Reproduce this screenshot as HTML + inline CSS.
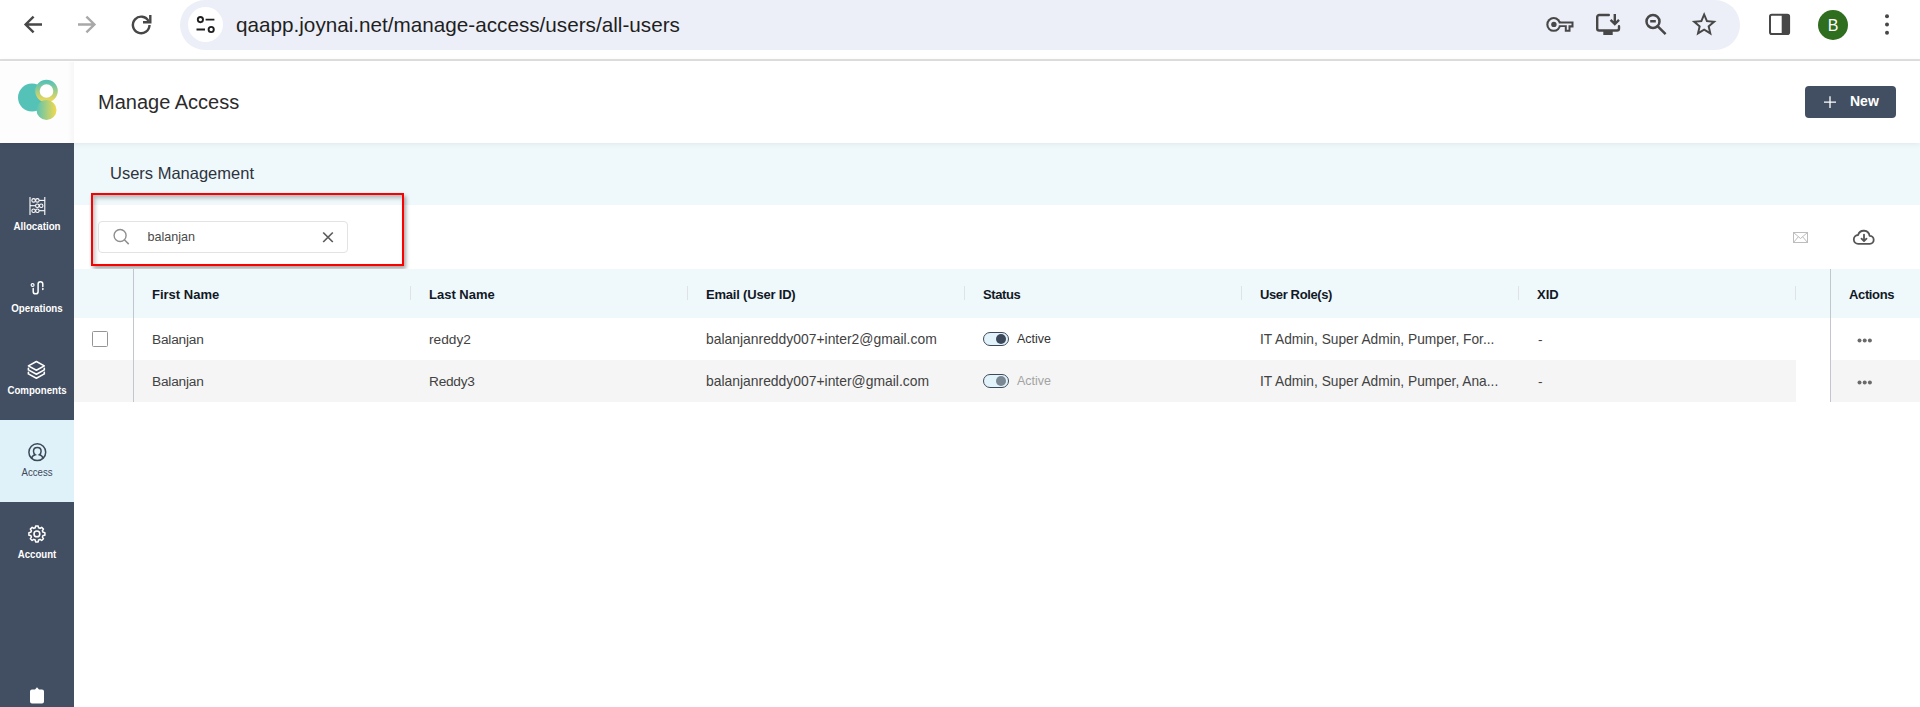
<!DOCTYPE html>
<html><head><meta charset="utf-8">
<style>
*{margin:0;padding:0;box-sizing:border-box}
html,body{width:1920px;height:707px;overflow:hidden;background:#fff;font-family:"Liberation Sans",sans-serif}
.a{position:absolute}
.t{position:absolute;white-space:nowrap;line-height:1}
svg{position:absolute;overflow:visible}
</style></head><body>

<!-- ===== Browser chrome ===== -->
<div class="a" style="left:0;top:0;width:1920px;height:59px;background:#fff"></div>
<div class="a" style="left:0;top:59px;width:1920px;height:2px;background:#dfe1de"></div>
<!-- back -->
<svg style="left:0;top:0" width="60" height="50"><path d="M42 24.5H27 M33.6 16.6L25.6 24.5L33.6 32.4" fill="none" stroke="#474747" stroke-width="2.4"/></svg>
<!-- forward -->
<svg style="left:0;top:0" width="120" height="50"><path d="M78 24.5H93 M86.4 16.6L94.4 24.5L86.4 32.4" fill="none" stroke="#a8a8a8" stroke-width="2.4"/></svg>
<!-- reload -->
<svg style="left:0;top:0" width="160" height="50"><path d="M148.6 21.2A8.3 8.3 0 1 0 149.5 25" fill="none" stroke="#474747" stroke-width="2.4"/><path d="M143 22.2H150.3V15" fill="none" stroke="#474747" stroke-width="2.4"/></svg>
<!-- omnibox -->
<div class="a" style="left:180px;top:0;width:1560px;height:50px;border-radius:25px;background:#eceff7"></div>
<div class="a" style="left:188px;top:7px;width:35px;height:35px;border-radius:50%;background:#fff"></div>
<svg style="left:0;top:0" width="240" height="50"><circle cx="200.4" cy="19.6" r="2.6" fill="none" stroke="#1f1f1f" stroke-width="1.9"/><path d="M205.6 19.6H214.4 M196.5 29.5H205" stroke="#1f1f1f" stroke-width="1.9"/><circle cx="211.2" cy="29.5" r="2.6" fill="none" stroke="#1f1f1f" stroke-width="1.9"/></svg>
<div class="t" style="left:236px;top:15px;font-size:20.7px;color:#1f1f1f">qaapp.joynai.net/manage-access/users/all-users</div>
<!-- key -->
<svg style="left:0;top:0" width="1920" height="50">
 <circle cx="1553.7" cy="24.4" r="7.4" fill="#474747"/>
 <path d="M1558 21.6H1573.5V27.4H1570.5V31.85H1564.8V26.9H1558Z" fill="#474747"/>
 <circle cx="1553.7" cy="24.4" r="5.3" fill="#eceff7"/>
 <path d="M1557 23.6H1571.5V25.3H1568.5V29.85H1566.8V25.3H1557Z" fill="#eceff7"/>
 <circle cx="1553.9" cy="24.4" r="2.7" fill="#474747"/>
</svg>
<!-- install -->
<svg style="left:0;top:0" width="1920" height="50"><path d="M1608.8 15H1599.3A2 2 0 0 0 1597.2 17V28.5A2 2 0 0 0 1599.2 30.5H1617A2 2 0 0 0 1619 28.5V26.2" fill="none" stroke="#474747" stroke-width="2.4" stroke-linecap="round"/><rect x="1603.3" y="31" width="9.4" height="4" fill="#474747"/><path d="M1614.8 14V24 M1610.6 19.8L1614.8 24.1L1619 19.8" fill="none" stroke="#474747" stroke-width="2.4"/></svg>
<!-- zoom out -->
<svg style="left:0;top:0" width="1920" height="50"><circle cx="1653" cy="21.4" r="6.5" fill="none" stroke="#474747" stroke-width="2.5"/><path d="M1650.2 21.3H1655.8 M1657.8 26.3L1665.6 34.2" stroke="#474747" stroke-width="2.5"/></svg>
<!-- star -->
<svg style="left:0;top:0" width="1920" height="50"><path transform="translate(1689.33 9.53) scale(1.235)" fill="#474747" d="M22 9.24l-7.19-.62L12 2 9.19 8.63 2 9.24l5.46 4.73L5.82 21 12 17.27 18.18 21l-1.63-7.03L22 9.24zM12 15.4l-3.76 2.27 1-4.28-3.32-2.88 4.380-.38L12 6.1l1.71 4.04 4.38.38-3.32 2.88 1 4.28L12 15.4z"/></svg>
<!-- side panel -->
<svg style="left:0;top:0" width="1920" height="50"><rect x="1770" y="14.7" width="19.1" height="19.3" rx="1.8" fill="none" stroke="#474747" stroke-width="2"/><rect x="1781.7" y="14.7" width="7.4" height="19.3" fill="#474747"/></svg>
<!-- avatar -->
<div class="a" style="left:1818px;top:10px;width:30px;height:30px;border-radius:50%;background:#2f6e1f"></div>
<div class="t" style="left:1827.8px;top:18px;font-size:16px;color:#fff">B</div>
<!-- kebab -->
<svg style="left:0;top:0" width="1920" height="50"><circle cx="1887" cy="16.2" r="2" fill="#474747"/><circle cx="1887" cy="24.5" r="2" fill="#474747"/><circle cx="1887" cy="32.8" r="2" fill="#474747"/></svg>

<!-- ===== App header ===== -->
<div class="a" style="left:0;top:61px;width:1920px;height:82px;background:#fff;box-shadow:0 1px 6px rgba(0,0,0,.07);z-index:2"></div>
<div class="a" style="left:0;top:62px;width:74px;height:81px;background:linear-gradient(to right,rgba(0,0,0,.006) 0,rgba(0,0,0,.006) 67px,rgba(0,0,0,.035) 74px);z-index:3"></div>
<svg style="left:0;top:0;z-index:4" width="80" height="140">
  <defs>
    <linearGradient id="g1" x1="0" y1="0" x2="0" y2="1"><stop offset="0" stop-color="#58c3b5"/><stop offset="1" stop-color="#e9d75a"/></linearGradient>
    <linearGradient id="g2" x1="0" y1="0" x2="1" y2="0"><stop offset="0" stop-color="#5ac4b4"/><stop offset="1" stop-color="#f3d94e"/></linearGradient>
  </defs>
  <circle cx="32" cy="97.6" r="14" fill="#55c2b7"/>
  <circle cx="46.5" cy="91" r="9.05" fill="#fff" stroke="url(#g1)" stroke-width="4.5"/>
  <circle cx="46.5" cy="110" r="10" fill="url(#g2)"/>
</svg>
<div class="t" style="left:98px;top:92.2px;font-size:20px;color:#2b2b2b;z-index:4">Manage Access</div>
<div class="a" style="left:1805px;top:86px;width:91px;height:32px;border-radius:4px;background:#424e61;z-index:4"></div>
<svg style="left:0;top:0;z-index:5" width="1920" height="140"><path d="M1830 96.3V108 M1824 102.2H1836" stroke="#fff" stroke-width="1.3"/></svg>
<div class="t" style="left:1850px;top:94.4px;font-size:14px;font-weight:bold;color:#fff;z-index:5">New</div>

<!-- ===== Sidebar ===== -->
<div class="a" style="left:0;top:143px;width:74px;height:564px;background:#424e61"></div>
<div class="a" style="left:0;top:420px;width:74px;height:82px;background:#dff2f9"></div>

<!-- ===== Content ===== -->
<div class="a" style="left:74px;top:143px;width:1846px;height:62px;background:#eff8fa"></div>
<div class="t" style="left:110px;top:165.2px;font-size:16.5px;color:#2d3340">Users Management</div>


<!-- sidebar items -->
<!-- abacus -->
<svg style="left:0;top:0" width="74" height="707">
 <g fill="none" stroke="#fff" stroke-width="1.1">
  <path d="M30 197V215 M44.8 197V215"/>
  <circle cx="33.6" cy="200.4" r="1.75"/><circle cx="37.4" cy="200.4" r="1.75"/><path d="M39.2 200.4H44.8"/>
  <path d="M30 205.7H35.5"/><circle cx="37.3" cy="205.7" r="1.75"/><circle cx="41.2" cy="205.7" r="1.75"/>
  <circle cx="33.6" cy="210.7" r="1.75"/><circle cx="37.4" cy="210.7" r="1.75"/><path d="M39.2 210.7H44.8"/>
 </g>
</svg>
<div class="t" style="left:0;width:74px;text-align:center;top:221.2px;font-size:11px;font-weight:bold;color:#fff;transform:scaleX(.885)">Allocation</div>
<!-- operations -->
<svg style="left:0;top:0" width="74" height="707">
 <g fill="none" stroke="#fff" stroke-width="1.5" stroke-linecap="round">
  <circle cx="32.6" cy="285" r="1.45" stroke-width="1.2"/>
  <path d="M33.2 288.4V291.4A2.45 2.45 0 0 0 38.1 291.4V284A2.35 2.35 0 0 1 42.8 284V286.4"/>
  <path d="M42.8 288.6V289.4"/>
 </g>
</svg>
<div class="t" style="left:0;width:74px;text-align:center;top:303.2px;font-size:11px;font-weight:bold;color:#fff;transform:scaleX(.885)">Operations</div>
<!-- components layers -->
<svg style="left:0;top:0" width="74" height="707">
 <g fill="none" stroke="#fff" stroke-width="1.6" stroke-linejoin="round" stroke-linecap="round">
  <path d="M36.4 361.5L44.3 365.9L36.4 370.2L28.4 365.9Z"/>
  <path d="M28.4 368.2V369.9L36.4 374.2L44.3 369.9V368.2"/>
  <path d="M28.4 372.2V373.9L36.4 378.2L44.3 373.9V372.2"/>
 </g>
</svg>
<div class="t" style="left:0;width:74px;text-align:center;top:385.2px;font-size:11px;font-weight:bold;color:#fff;transform:scaleX(.88)">Components</div>
<!-- access -->
<svg style="left:0;top:0" width="74" height="707">
 <g fill="none" stroke="#3d4859" stroke-width="1.5">
  <circle cx="37.3" cy="452.2" r="8.4"/>
  <path d="M31.6 458.3C32.2 455.9 33.8 455.2 35.3 454.8C33.9 453.8 33.5 452.6 33.5 451.2C33.5 448.9 35.2 447.5 37.3 447.5C39.4 447.5 41.1 448.9 41.1 451.2C41.1 452.6 40.7 453.8 39.3 454.8C40.8 455.2 42.4 455.9 43 458.3"/>
 </g>
</svg>
<div class="t" style="left:0;width:74px;text-align:center;top:467.2px;font-size:11px;color:#3d4859;transform:scaleX(.875)">Access</div>
<!-- account gear -->
<svg style="left:0;top:0" width="74" height="707">
 <g fill="none" stroke="#fff" stroke-width="1.5" stroke-linejoin="round">
  <path d="M35.27 527.81L35.63 525.90 L38.17 525.90 L38.53 527.81 A6.30 6.30 0 0 1 40.05 528.44L41.66 527.35 L43.45 529.14 L42.36 530.75 A6.30 6.30 0 0 1 42.99 532.27L44.90 532.63 L44.90 535.17 L42.99 535.53 A6.30 6.30 0 0 1 42.36 537.05L43.45 538.66 L41.66 540.45 L40.05 539.36 A6.30 6.30 0 0 1 38.53 539.99L38.17 541.90 L35.63 541.90 L35.27 539.99 A6.30 6.30 0 0 1 33.75 539.36L32.14 540.45 L30.35 538.66 L31.44 537.05 A6.30 6.30 0 0 1 30.81 535.53L28.90 535.17 L28.90 532.63 L30.81 532.27 A6.30 6.30 0 0 1 31.44 530.75L30.35 529.14 L32.14 527.35 L33.75 528.44 A6.30 6.30 0 0 1 35.27 527.81Z"/>
  <circle cx="36.9" cy="533.9" r="2.9" stroke-width="1.6"/>
 </g>
</svg>
<div class="t" style="left:0;width:74px;text-align:center;top:549.2px;font-size:11px;font-weight:bold;color:#fff;transform:scaleX(.875)">Account</div>
<!-- clipboard -->
<svg style="left:0;top:0" width="74" height="707">
 <path d="M32 689.5H35L37 687.2L39 689.5H42A2 2 0 0 1 44 691.5V701.5A2 2 0 0 1 42 703.5H32A2 2 0 0 1 30 701.5V691.5A2 2 0 0 1 32 689.5Z" fill="#fff"/>
</svg>

<!-- search area -->
<div class="a" style="left:98px;top:221px;width:249.5px;height:31.5px;border:1px solid #e3e3e3;border-radius:4px;background:#fff"></div>
<svg style="left:0;top:0" width="400" height="300"><circle cx="120.1" cy="235.5" r="6" fill="none" stroke="#8f8f8f" stroke-width="1.4"/><path d="M124.4 239.8L128.7 244.1" stroke="#8f8f8f" stroke-width="1.5"/></svg>
<div class="t" style="left:147.4px;top:230.6px;font-size:12.6px;color:#4a4a4a">balanjan</div>
<svg style="left:0;top:0" width="400" height="300"><path d="M323.2 232.5L332.8 242 M332.8 232.5L323.2 242" stroke="#5c5c5c" stroke-width="1.7"/></svg>
<!-- red highlight box -->
<div class="a" style="left:91px;top:193px;width:313px;height:73px;border:2.5px solid #fa0000;box-shadow:2px 3px 4px rgba(0,0,0,.35), inset 2px 3px 4px rgba(0,0,0,.25)"></div>

<!-- toolbar icons -->
<svg style="left:0;top:0" width="1920" height="300">
 <g fill="none" stroke="#bdbdbd" stroke-width="1">
  <rect x="1793.5" y="232.5" width="14" height="10"/>
  <path d="M1793.5 232.5L1800.5 238.5L1807.5 232.5 M1793.5 242.5L1798.3 236.8 M1807.5 242.5L1802.7 236.8"/>
 </g>
 <g fill="none" stroke="#555" stroke-width="1.8" stroke-linecap="round" stroke-linejoin="round">
  <path d="M1858.3 243.8H1869.8A4 4 0 0 0 1869.6 235.8A5.9 5.9 0 0 0 1858.1 235A4.4 4.4 0 0 0 1858.3 243.8Z"/>
  <path d="M1864 234.6V240.8 M1861.5 238.6L1864 241.1L1866.5 238.6"/>
 </g>
</svg>

<!-- table header -->
<div class="a" style="left:74px;top:269px;width:1846px;height:49px;background:#eff8fa"></div>
<div class="a" style="left:74px;top:360px;width:1722px;height:42px;background:#f5f5f5"></div>
<div class="a" style="left:1831px;top:360px;width:89px;height:42px;background:#f5f5f5"></div>
<div class="a" style="left:133px;top:269px;width:1px;height:132.5px;background:#c2c7cf"></div>
<div class="a" style="left:1830px;top:269px;width:1px;height:132.5px;background:#c2c7cf"></div>
<div class="a" style="left:410px;top:286px;width:1px;height:14px;background:#dfe3e6"></div>
<div class="a" style="left:687px;top:286px;width:1px;height:14px;background:#dfe3e6"></div>
<div class="a" style="left:964px;top:286px;width:1px;height:14px;background:#dfe3e6"></div>
<div class="a" style="left:1241px;top:286px;width:1px;height:14px;background:#dfe3e6"></div>
<div class="a" style="left:1518px;top:286px;width:1px;height:14px;background:#dfe3e6"></div>
<div class="a" style="left:1795px;top:286px;width:1px;height:14px;background:#dfe3e6"></div>

<div class="t" style="left:152px;top:288.2px;font-size:13px;font-weight:bold;color:#121826">First Name</div>
<div class="t" style="left:429px;top:288.2px;font-size:13px;font-weight:bold;color:#121826">Last Name</div>
<div class="t" style="left:706px;top:288.2px;font-size:13px;font-weight:bold;color:#121826;letter-spacing:-.2px">Email (User ID)</div>
<div class="t" style="left:983px;top:288.2px;font-size:13px;font-weight:bold;color:#121826;letter-spacing:-.42px">Status</div>
<div class="t" style="left:1260px;top:288.2px;font-size:13px;font-weight:bold;color:#121826;letter-spacing:-.38px">User Role(s)</div>
<div class="t" style="left:1537px;top:288.2px;font-size:13px;font-weight:bold;color:#121826">XID</div>
<div class="t" style="left:1849px;top:288.2px;font-size:13px;font-weight:bold;color:#121826;letter-spacing:-.36px">Actions</div>

<!-- row 1 -->
<div class="a" style="left:92px;top:331px;width:16px;height:16px;border:1.7px solid #959595;border-radius:1.5px;background:#fff"></div>
<div class="t" style="left:152px;top:332.6px;font-size:13.7px;color:#424242;letter-spacing:-.2px">Balanjan</div>
<div class="t" style="left:429px;top:332.6px;font-size:13.7px;color:#424242">reddy2</div>
<div class="t" style="left:706px;top:332.6px;font-size:13.9px;color:#424242">balanjanreddy007+inter2@gmail.com</div>
<div class="a" style="left:983px;top:332px;width:26px;height:14px;border:1.5px solid #3e4a5c;border-radius:7px;background:#e3f3fa"></div>
<div class="a" style="left:995.7px;top:333.8px;width:10.3px;height:10.3px;border-radius:50%;background:#3e4a5c"></div>
<div class="t" style="left:1017px;top:333.1px;font-size:12.5px;color:#333">Active</div>
<div class="t" style="left:1260px;top:332.6px;font-size:13.75px;color:#424242">IT Admin, Super Admin, Pumper, For...</div>
<div class="t" style="left:1538px;top:332.6px;font-size:13.7px;color:#424242">-</div>
<svg style="left:0;top:0" width="1920" height="400"><g fill="#6a6a6a"><circle cx="1859.5" cy="340.6" r="2"/><circle cx="1864.7" cy="340.6" r="2"/><circle cx="1869.9" cy="340.6" r="2"/></g></svg>

<!-- row 2 -->
<div class="t" style="left:152px;top:374.6px;font-size:13.7px;color:#424242;letter-spacing:-.2px">Balanjan</div>
<div class="t" style="left:429px;top:374.6px;font-size:13.7px;color:#424242;letter-spacing:-.25px">Reddy3</div>
<div class="t" style="left:706px;top:374.6px;font-size:13.9px;color:#424242">balanjanreddy007+inter@gmail.com</div>
<div class="a" style="left:983px;top:374px;width:26px;height:14px;border:1.5px solid #3e4a5c;border-radius:7px;background:#e3f3fa"></div>
<div class="a" style="left:995.7px;top:375.8px;width:10.3px;height:10.3px;border-radius:50%;background:#7c8794"></div>
<div class="t" style="left:1017px;top:375.1px;font-size:12.5px;color:#a3a3a3">Active</div>
<div class="t" style="left:1260px;top:374.6px;font-size:13.75px;color:#424242">IT Admin, Super Admin, Pumper, Ana...</div>
<div class="t" style="left:1538px;top:374.6px;font-size:13.7px;color:#424242">-</div>
<svg style="left:0;top:0" width="1920" height="400"><g fill="#6a6a6a"><circle cx="1859.5" cy="382.4" r="2"/><circle cx="1864.7" cy="382.4" r="2"/><circle cx="1869.9" cy="382.4" r="2"/></g></svg>

</body></html>
